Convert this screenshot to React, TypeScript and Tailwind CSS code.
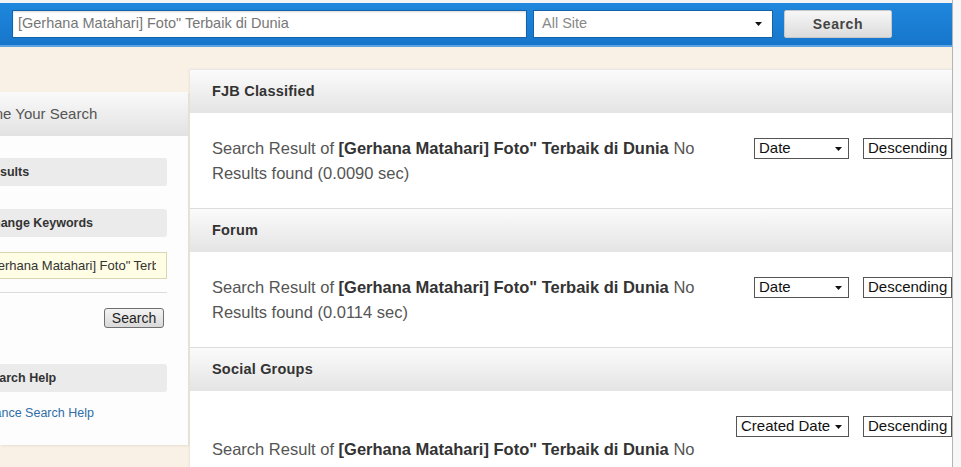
import React from "react"

const QUERY = "[Gerhana Matahari] Foto\" Terbaik di Dunia"

function Arrow() {
  return (
    <svg width="7" height="4" viewBox="0 0 7 4" className="shrink-0">
      <path d="M0 0h7L3.5 4z" fill="#111" />
    </svg>
  )
}

function SortSelect({ label, width, arrow = true }: { label: string; width: string; arrow?: boolean }) {
  return (
    <div
      className={`${width} h-[21px] border border-[#555] bg-white flex items-center justify-between pl-[4px] pr-[6px] text-[15px] text-[#111]`}
    >
      <span>{label}</span>
      {arrow && <Arrow />}
    </div>
  )
}

function ResultText({ time }: { time: string }) {
  return (
    <p className="w-[505px] text-[16.5px] leading-[25px] text-[#555]">
      Search Result of <b className="text-[#333]">{QUERY}</b> No Results found ({time} sec)
    </p>
  )
}

function SectionHeader({ title }: { title: string }) {
  return (
    <div className="h-[43px] flex items-center pl-[22px] bg-gradient-to-b from-[#fbfbfb] to-[#e4e4e4] text-[14.5px] tracking-[0.2px] font-bold text-[#333]">
      {title}
    </div>
  )
}

function SideBox({ label }: { label: string }) {
  return (
    <div className="ml-[12px] mr-[21px] h-[28px] rounded-[3px] bg-[#ebebeb] flex items-center pl-[9px] text-[12.5px] font-bold text-[#333]">
      {label}
    </div>
  )
}

export default function App() {
  return (
    <div className="w-[961px] h-[467px] overflow-hidden flex bg-[#f7f7f7] font-['Liberation_Sans',Arial,sans-serif]">
      <div className="w-[953px] shrink-0 h-full overflow-hidden bg-[#f9f1e5] border-r border-[#b5b5b5]">
        <div className="h-[3px] bg-[#f4f4f4]" />

        {/* Top search bar */}
        <div className="h-[44px] flex items-center pl-[12px] bg-gradient-to-b from-[#1f87dd] to-[#1676cb] border-b-2 border-[#5ba3e3]">
          <div className="w-[515px] h-[28px] bg-white border border-[#1462a8] shadow-[inset_0_1px_2px_rgba(0,0,0,0.15)] flex items-center pl-[5px] text-[14.5px] text-[#777]">
            {QUERY}
          </div>
          <div className="ml-[6px] w-[240px] h-[28px] bg-white border border-[#1462a8] flex items-center justify-between pl-[8px] pr-[10px] text-[14.5px] text-[#888]">
            <span>All Site</span>
            <Arrow />
          </div>
          <button className="ml-[11px] w-[108px] h-[28px] rounded-[2px] bg-gradient-to-b from-[#f7f7f7] to-[#dcdcdc] border border-[#c8c8c8] text-[14px] font-bold text-[#444] tracking-[0.6px]">
            Search
          </button>
        </div>

        <div className="flex items-start gap-[2px] pt-[22px]">
          {/* Sidebar */}
          <div className="w-[188px] shrink-0 mt-[23px] overflow-hidden shadow-[1px_1px_2px_rgba(0,0,0,0.08)]">
            <div className="ml-[-37px] w-[225px] bg-[#fdfdfd]">
              <div className="h-[44px] flex items-center pl-[5px] bg-gradient-to-b from-[#fafafa] to-[#e2e2e2] text-[15px] text-[#555]">
                Refine Your Search
              </div>
              <div className="h-[309px] pt-[22px]">
                <SideBox label="Results" />
                <div className="mt-[23px]">
                  <SideBox label="Change Keywords" />
                </div>
                <div className="mt-[15px] ml-[12px] mr-[21px] h-[27px] bg-[#fffde4] border border-[#d9d6b4] flex items-center pl-[8px] pr-[10px] text-[13px] text-[#333]">
                  <span className="block w-full overflow-hidden whitespace-nowrap">{QUERY}</span>
                </div>
                <div className="mt-[13px] mr-[21px] h-px bg-[#dcdcdc]" />
                <div className="mt-[15px] mr-[24px] flex justify-end">
                  <button className="w-[60px] h-[20px] rounded-[3px] border border-[#707070] bg-gradient-to-b from-[#f4f4f4] to-[#d9d9d9] text-[14px] leading-none text-[#222]">
                    Search
                  </button>
                </div>
                <div className="mt-[36px]">
                  <SideBox label="Search Help" />
                </div>
                <div className="mt-[14px] ml-[10px] text-[12.5px] leading-[14px] text-[#2f6fa5]">
                  Advance Search Help
                </div>
              </div>
            </div>
          </div>

          {/* Results */}
          <div className="flex-1 bg-white border-t border-[#e8e8e8] shadow-[-1px_0_2px_rgba(0,0,0,0.06)]">
            <SectionHeader title="FJB Classified" />
            <div className="h-[96px] border-b border-[#dcdcdc] flex items-start pl-[22px] pt-[23px]">
              <ResultText time="0.0090" />
              <div className="ml-auto mt-[2px] flex gap-[14px]">
                <SortSelect label="Date" width="w-[95px]" />
                <SortSelect label="Descending" width="w-[89px]" arrow={false} />
              </div>
            </div>

            <SectionHeader title="Forum" />
            <div className="h-[96px] border-b border-[#dcdcdc] flex items-start pl-[22px] pt-[23px]">
              <ResultText time="0.0114" />
              <div className="ml-auto mt-[2px] flex gap-[14px]">
                <SortSelect label="Date" width="w-[95px]" />
                <SortSelect label="Descending" width="w-[89px]" arrow={false} />
              </div>
            </div>

            <SectionHeader title="Social Groups" />
            <div className="h-[120px] pl-[22px] pt-[25px] flex flex-col">
              <div className="flex justify-end gap-[14px]">
                <SortSelect label="Created Date" width="w-[113px]" />
                <SortSelect label="Descending" width="w-[89px]" arrow={false} />
              </div>
              <ResultText time="0.0102" />
            </div>
          </div>
        </div>
      </div>
      <div className="flex-1 bg-[#f7f7f7]" />
    </div>
  )
}
